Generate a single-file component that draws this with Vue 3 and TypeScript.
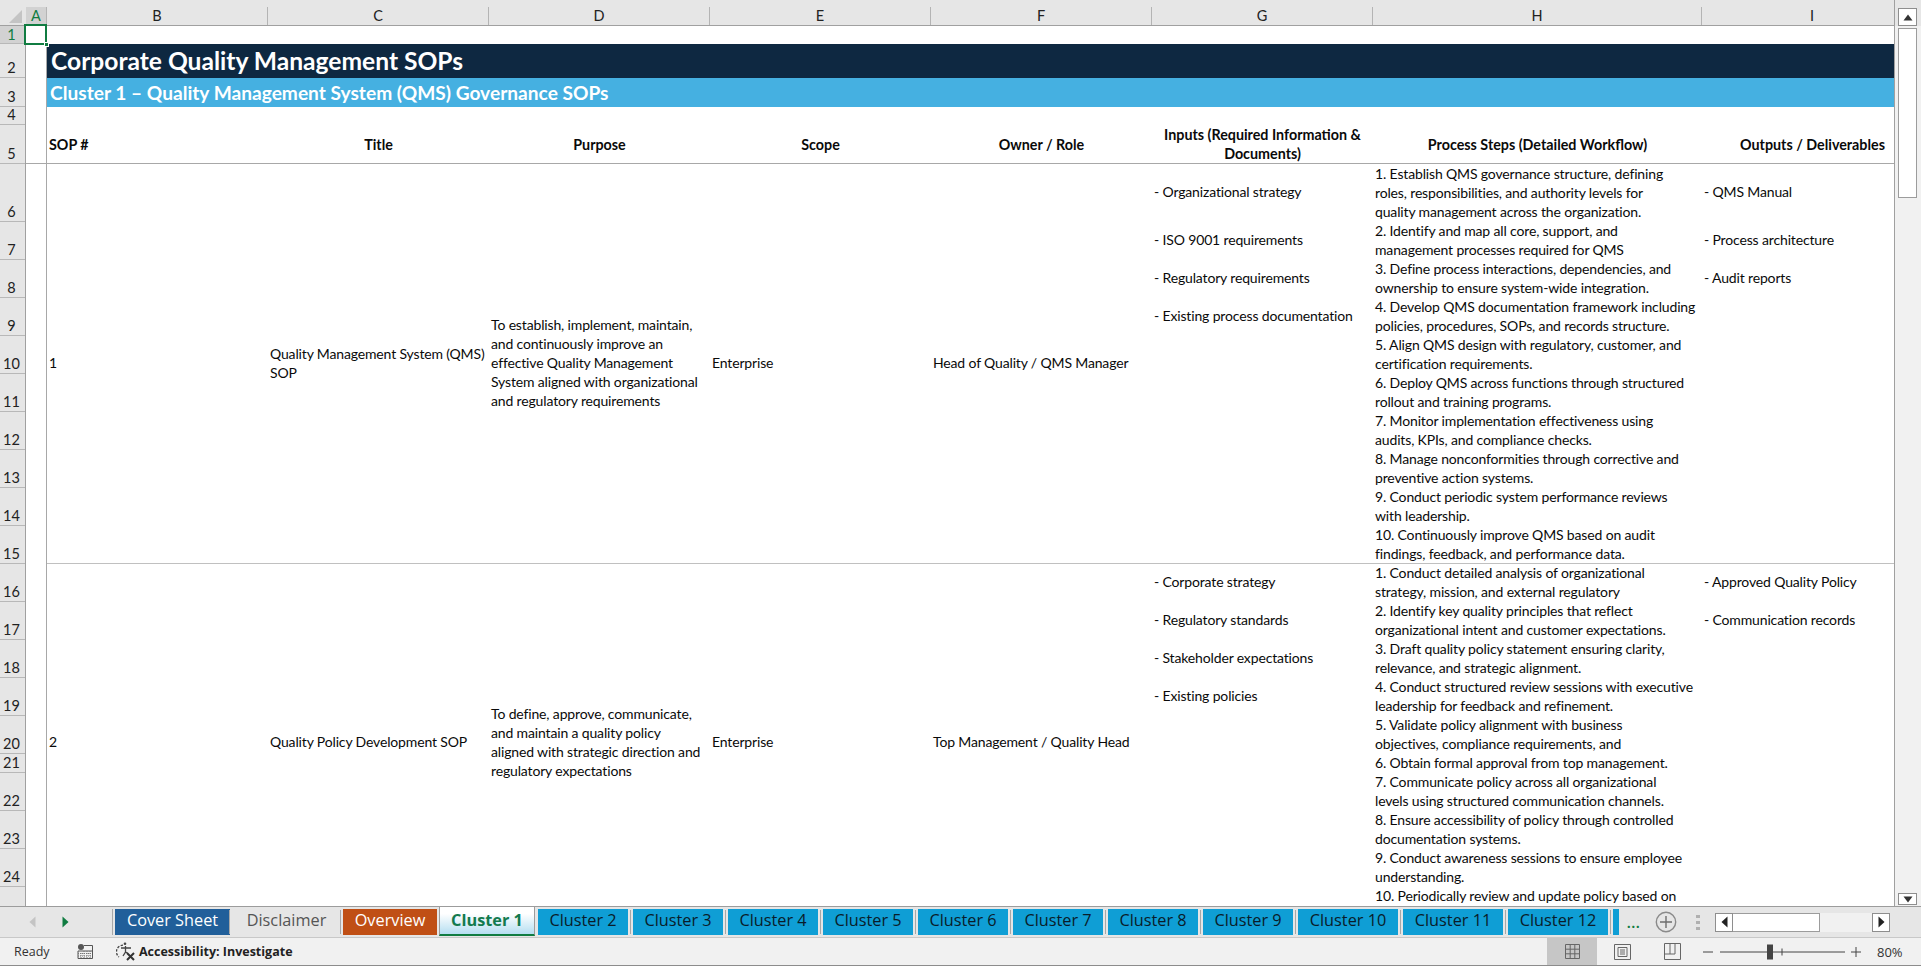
<script setup lang="ts">
const columns = [
  { name: 'A', width: 21, sel: true },
  { name: 'B', width: 221 },
  { name: 'C', width: 221 },
  { name: 'D', width: 221 },
  { name: 'E', width: 221 },
  { name: 'F', width: 221 },
  { name: 'G', width: 221 },
  { name: 'H', width: 329 },
  { name: 'I', width: 221 },
]
const rowHeights = [18, 34, 29, 18, 39, 58, 38, 38, 38, 38, 38, 38, 38, 38, 38, 38, 38, 38, 38, 38, 19, 38, 38, 38]
const rows = rowHeights.map((h, i) => ({ n: i + 1, h }))

const sops = [
  {
    no: '1',
    cls: 'sop-one',
    title: ['Quality Management System (QMS)', 'SOP'],
    purpose: ['To establish, implement, maintain,', 'and continuously improve an', 'effective Quality Management', 'System aligned with organizational', 'and regulatory requirements'],
    scope: 'Enterprise',
    owner: 'Head of Quality / QMS Manager',
    inputs: ['- Organizational strategy', '- ISO 9001 requirements', '- Regulatory requirements', '- Existing process documentation'],
    steps: [
      '1. Establish QMS governance structure, defining', 'roles, responsibilities, and authority levels for', 'quality management across the organization.',
      '2. Identify and map all core, support, and', 'management processes required for QMS',
      '3. Define process interactions, dependencies, and', 'ownership to ensure system-wide integration.',
      '4. Develop QMS documentation framework including', 'policies, procedures, SOPs, and records structure.',
      '5. Align QMS design with regulatory, customer, and', 'certification requirements.',
      '6. Deploy QMS across functions through structured', 'rollout and training programs.',
      '7. Monitor implementation effectiveness using', 'audits, KPIs, and compliance checks.',
      '8. Manage nonconformities through corrective and', 'preventive action systems.',
      '9. Conduct periodic system performance reviews', 'with leadership.',
      '10. Continuously improve QMS based on audit', 'findings, feedback, and performance data.',
    ],
    outputs: ['- QMS Manual', '- Process architecture', '- Audit reports'],
  },
  {
    no: '2',
    cls: 'sop-two',
    title: ['Quality Policy Development SOP'],
    purpose: ['To define, approve, communicate,', 'and maintain a quality policy', 'aligned with strategic direction and', 'regulatory expectations'],
    scope: 'Enterprise',
    owner: 'Top Management / Quality Head',
    inputs: ['- Corporate strategy', '- Regulatory standards', '- Stakeholder expectations', '- Existing policies'],
    steps: [
      '1. Conduct detailed analysis of organizational', 'strategy, mission, and external regulatory',
      '2. Identify key quality principles that reflect', 'organizational intent and customer expectations.',
      '3. Draft quality policy statement ensuring clarity,', 'relevance, and strategic alignment.',
      '4. Conduct structured review sessions with executive', 'leadership for feedback and refinement.',
      '5. Validate policy alignment with business', 'objectives, compliance requirements, and',
      '6. Obtain formal approval from top management.',
      '7. Communicate policy across all organizational', 'levels using structured communication channels.',
      '8. Ensure accessibility of policy through controlled', 'documentation systems.',
      '9. Conduct awareness sessions to ensure employee', 'understanding.',
      '10. Periodically review and update policy based on',
    ],
    outputs: ['- Approved Quality Policy', '- Communication records'],
  },
]

const tabs = [
  { label: 'Cover Sheet', width: 115, cls: 'navy' },
  { label: 'Disclaimer', width: 109, cls: 'plain' },
  { label: 'Overview', width: 94, cls: 'rust' },
  { label: 'Cluster 1', width: 96, cls: 'active' },
  ...[2, 3, 4, 5, 6, 7, 8, 9].map((n) => ({ label: `Cluster ${n}`, width: 90, cls: 'blue' })),
  ...[10, 11, 12].map((n) => ({ label: `Cluster ${n}`, width: 100, cls: 'blue' })),
  { label: '', width: 6, cls: 'blue' },
]
</script>

<template>
  <div class="app">
    <div class="upper">
      <div class="workarea">
        <div class="colhead">
          <div class="corner"><span class="triangle"></span></div>
          <div
            v-for="c in columns"
            :key="c.name"
            class="collabel"
            :class="{ selected: c.sel }"
            :style="{ width: c.width + 'px' }"
          >{{ c.name }}</div>
        </div>
        <div class="grid">
          <div class="rowhead">
            <div
              v-for="r in rows"
              :key="r.n"
              class="rowlabel"
              :class="{ selected: r.n === 1 }"
              :style="{ height: r.h + 'px' }"
            >{{ r.n }}</div>
          </div>
          <div class="colA">
            <div class="selection"><span class="handle"></span></div>
          </div>
          <div class="sheet">
            <div class="blank-row"></div>
            <div class="banner-dark">Corporate Quality Management SOPs</div>
            <div class="banner-light">Cluster 1 – Quality Management System (QMS) Governance SOPs</div>
            <div class="blank-row"></div>
            <div class="columns head-row">
              <div class="head left">SOP #</div>
              <div class="head">Title</div>
              <div class="head">Purpose</div>
              <div class="head">Scope</div>
              <div class="head">Owner / Role</div>
              <div class="head">Inputs (Required Information &amp;<br />Documents)</div>
              <div class="head">Process Steps (Detailed Workflow)</div>
              <div class="head">Outputs / Deliverables</div>
            </div>
            <div v-for="s in sops" :key="s.no" class="columns sop" :class="s.cls">
              <div class="cell">{{ s.no }}</div>
              <div class="cell"><div v-for="l in s.title" :key="l">{{ l }}</div></div>
              <div class="cell"><div v-for="l in s.purpose" :key="l">{{ l }}</div></div>
              <div class="cell">{{ s.scope }}</div>
              <div class="cell">{{ s.owner }}</div>
              <div class="stack">
                <div v-for="l in s.inputs" :key="l" class="stack-item">{{ l }}</div>
              </div>
              <div class="steps"><div v-for="l in s.steps" :key="l">{{ l }}</div></div>
              <div class="stack">
                <div v-for="l in s.outputs" :key="l" class="stack-item">{{ l }}</div>
              </div>
            </div>
          </div>
        </div>
      </div>
      <div class="vscroll">
        <div class="sb-btn">
          <svg width="10" height="7" viewBox="0 0 10 7"><path d="M5 0.5 L9.5 6.5 H0.5 Z" fill="#333" /></svg>
        </div>
        <div class="sb-thumb"></div>
        <div class="sb-track"></div>
        <div class="sb-btn down">
          <svg width="10" height="7" viewBox="0 0 10 7"><path d="M5 6.5 L9.5 0.5 H0.5 Z" fill="#333" /></svg>
        </div>
      </div>
    </div>

    <div class="tabbar">
      <div class="tabnav">
        <svg width="7" height="12" viewBox="0 0 7 12"><path d="M6.5 0.5 V11.5 L0.5 6 Z" fill="#c4c4c4" /></svg>
        <svg width="7" height="12" viewBox="0 0 7 12"><path d="M0.5 0.5 V11.5 L6.5 6 Z" fill="#107c41" /></svg>
      </div>
      <div class="tabs">
        <div
          v-for="t in tabs"
          :key="t.label + t.width"
          class="tab"
          :class="t.cls"
          :style="{ width: t.width + 'px' }"
        >{{ t.label }}</div>
      </div>
      <div class="more">...</div>
      <svg class="addsheet" width="22" height="22" viewBox="0 0 22 22">
        <circle cx="11" cy="11" r="9.7" fill="none" stroke="#8a8a8a" stroke-width="1.4" />
        <path d="M11 5 V17 M5 11 H17" stroke="#6e6e6e" stroke-width="1.4" />
      </svg>
      <div class="vdots"><span></span><span></span><span></span></div>
      <div class="hscroll">
        <div class="hs-btn">
          <svg width="7" height="12" viewBox="0 0 7 12"><path d="M6.5 0.5 V11.5 L0.5 6 Z" fill="#222" /></svg>
        </div>
        <div class="hs-thumb"></div>
        <div class="hs-track"></div>
        <div class="hs-btn">
          <svg width="7" height="12" viewBox="0 0 7 12"><path d="M0.5 0.5 V11.5 L6.5 6 Z" fill="#222" /></svg>
        </div>
      </div>
    </div>

    <div class="status">
      <span class="ready">Ready</span>
      <svg class="macro" width="16" height="15" viewBox="0 0 16 15">
        <circle cx="4" cy="3" r="3" fill="#555" />
        <path d="M7 1.5 H15.5 V14.5 H1 V7 H15.5" fill="none" stroke="#555" stroke-width="1" />
        <path d="M4 9 V14 M7 7 V14 M10 7 V14 M13 7 V14 M1 9.5 H15 M1 12 H15" stroke="#777" stroke-width="1" stroke-dasharray="1 1" />
      </svg>
      <svg class="a11y" width="20" height="19" viewBox="0 0 20 19">
        <path d="M7 3.2 A6.6 6.6 0 0 0 3 15" fill="none" stroke="#444" stroke-width="1.3" stroke-dasharray="2.4 1.4" />
        <circle cx="9" cy="1.8" r="1.3" fill="#444" />
        <path d="M5 6 H15 M9.5 4 V10 L7 14 M9.5 10 L11.5 11" fill="none" stroke="#444" stroke-width="1.3" />
        <path d="M11 11 L18 18 M18 11 L11 18" stroke="#333" stroke-width="2" />
      </svg>
      <span class="a11y-text">Accessibility: Investigate</span>
      <div class="views">
        <div class="view on">
          <svg width="15" height="15" viewBox="0 0 15 15"><path d="M0.5 0.5 H14.5 V14.5 H0.5 Z M5.2 0.5 V14.5 M9.8 0.5 V14.5 M0.5 5.2 H14.5 M0.5 9.8 H14.5" fill="none" stroke="#666" /></svg>
        </div>
        <div class="view">
          <svg width="17" height="16" viewBox="0 0 17 16"><path d="M0.5 0.5 H16.5 V15.5 H0.5 Z" fill="none" stroke="#666" /><path d="M4 3.5 H13 V12.5 H4 Z M6 6 H11 M6 8 H11 M6 10 H11" fill="none" stroke="#666" /></svg>
        </div>
        <div class="view">
          <svg width="17" height="17" viewBox="0 0 17 17"><path d="M0.5 0.5 H16.5 V16.5 H0.5 Z M0.5 11 H11 V0.5 M6 0.5 V11" fill="none" stroke="#666" /></svg>
        </div>
      </div>
      <svg class="zoombar" width="165" height="16" viewBox="0 0 165 16">
        <path d="M3 8 H13 M20 8 H145 M82 4.5 V11.5 M151 8 H161 M156 3 V13" stroke="#444" stroke-width="1" />
        <rect x="67" y="0.5" width="6" height="15" fill="#444" />
      </svg>
      <span class="zoomtext">80%</span>
    </div>
  </div>
</template>

<style>
html, body { margin: 0; padding: 0; background: #fff; }
</style>

<style scoped>
.app {
  width: 1921px;
  height: 966px;
  display: flex;
  flex-direction: column;
  overflow: hidden;
  font-family: Lato, "Liberation Sans", sans-serif;
  color: #0a0a0a;
  background: #fff;
}
.upper { display: flex; height: 907px; border-bottom: 1px solid #9c9c9c; box-sizing: border-box; }
.workarea { width: 1894px; overflow: hidden; display: flex; flex-direction: column; }

.colhead {
  display: flex;
  height: 26px;
  flex: none;
  background: #e6e6e6;
  border-bottom: 1px solid #a0a0a0;
  box-sizing: border-box;
}
.corner { width: 26px; flex: none; position: relative; }
.triangle {
  position: absolute;
  left: 9px;
  top: 10px;
  width: 0;
  height: 0;
  border-left: 13px solid transparent;
  border-bottom: 13px solid #c4c4c4;
}
.collabel {
  flex: none;
  box-sizing: border-box;
  height: 18px;
  margin-top: 7px;
  border-right: 1px solid #b4b4b4;
  font-size: 14.5px;
  line-height: 18px;
  text-align: center;
  color: #222;
}
.collabel.selected { background: #d2d2d2; color: #107c41; }

.grid { display: flex; flex: 1; min-height: 0; }
.rowhead {
  width: 26px;
  flex: none;
  background: #e6e6e6;
  border-right: 1px solid #a0a0a0;
  box-sizing: border-box;
}
.rowlabel {
  box-sizing: border-box;
  border-bottom: 1px solid #b8b8b8;
  display: flex;
  align-items: flex-end;
  justify-content: center;
  padding-right: 2px;
  font-size: 14.5px;
  line-height: 18px;
  color: #222;
}
.rowlabel.selected { background: #d2d2d2; color: #107c41; align-items: center; }
.colA {
  width: 21px;
  flex: none;
  border-right: 1px solid #a8a8a8;
  box-sizing: border-box;
  position: relative;
}
.colA::after {
  content: "";
  position: absolute;
  left: 0;
  right: 0;
  top: 137px;
  height: 1px;
  background: #a8a8a8;
}
.selection {
  position: absolute;
  left: -2px;
  top: -2px;
  width: 19px;
  height: 17px;
  border: 2px solid #107c41;
  box-sizing: content-box;
  z-index: 2;
}
.handle {
  position: absolute;
  right: -4px;
  bottom: -4px;
  width: 5px;
  height: 5px;
  background: #107c41;
  border: 1px solid #fff;
  box-sizing: border-box;
}

.sheet { width: 1875px; flex: none; overflow: hidden; }
.blank-row { height: 18px; }
.banner-dark {
  height: 34px;
  background: #0e2841;
  color: #fff;
  font-size: 24.6px;
  font-weight: 700;
  line-height: 34px;
  padding-left: 4px;
}
.banner-light {
  height: 29px;
  background: #45b0e1;
  color: #fff;
  font-size: 19.15px;
  font-weight: 700;
  line-height: 30px;
  padding-left: 3px;
}
.columns {
  display: grid;
  grid-template-columns: repeat(6, 221px) 329px 221px;
  font-size: 14px;
  letter-spacing: -0.15px;
  line-height: 19px;
  white-space: nowrap;
}
.head-row { height: 39px; border-bottom: 1px solid #a8a8a8; box-sizing: border-box; }
.head {
  font-size: 14.3px;
  letter-spacing: 0;
  font-weight: 700;
  text-align: center;
  align-self: center;
  margin-bottom: 1px;
}
.head.left { text-align: left; padding-left: 2px; }
.sop { box-sizing: border-box; border-bottom: 1px solid #c0c0c0; }
.sop-one { height: 400px; }
.sop-two { height: 360px; margin-top: -1px; }
.cell { align-self: center; padding-left: 2px; margin-bottom: 2px; }
.steps { padding-left: 2px; overflow: hidden; }
.stack { margin-top: -1px; }
.stack-item { height: 38px; display: flex; align-items: center; padding-left: 2px; }
.sop-one .stack-item:first-child { height: 58px; margin-top: -1px; }

.vscroll {
  width: 27px;
  flex: none;
  box-sizing: border-box;
  border-left: 1px solid #a0a0a0;
  background: linear-gradient(#e6e6e6 0 26px, #f1f1f1 26px);
  padding: 8px 4px 1px 3px;
  display: flex;
  flex-direction: column;
}
.sb-btn {
  height: 18px;
  flex: none;
  background: #fff;
  border: 1px solid #8e8e8e;
  box-sizing: border-box;
  display: flex;
  align-items: center;
  justify-content: center;
}
.sb-thumb { height: 170px; flex: none; margin-top: 2px; background: #fff; border: 1px solid #9c9c9c; box-sizing: border-box; }
.sb-track { flex: 1; }
.sb-btn.down { height: 12px; }

.tabbar {
  height: 31px;
  flex: none;
  background: #e6e6e6;
  border-bottom: 1px solid #c8c8c8;
  box-sizing: border-box;
  display: flex;
  align-items: center;
}
.tabnav {
  width: 113px;
  height: 26px;
  flex: none;
  box-sizing: border-box;
  padding-left: 29px;
  display: flex;
  align-items: center;
  gap: 26px;
  border-right: 1px solid #a8a8a8;
  margin-top: -1px;
}
.tabs {
  width: 1505px;
  flex: none;
  display: flex;
  align-items: flex-start;
  box-sizing: border-box;
  align-self: stretch;
  padding-top: 2px;
}
.tab {
  flex: none;
  height: 26px;
  box-sizing: border-box;
  margin-left: 5px;
  font-family: "Open Sans", "Noto Sans", sans-serif;
  font-size: 16.3px;
  line-height: 22px;
  text-align: center;
  position: relative;
  white-space: nowrap;
}
.tab + .tab::before {
  content: "";
  position: absolute;
  left: -3px;
  top: 1px;
  bottom: 1px;
  width: 1px;
  background: #a8a8a8;
}
.tab.navy { background: #215f9a; color: #fff; margin-left: 2px; }
.tab.rust { background: #c04f15; color: #fff; margin-left: 2px; }
.tab.plain { color: #555; margin-left: 2px; }
.tab.blue { background: #0f9ed5; color: #0a1c2a; }
.tab.active {
  height: 29px;
  margin-top: -2px;
  margin-left: 2px;
  font-weight: 700;
  color: #137a4e;
  background: linear-gradient(#fff, #fff 25%, #b5def1);
  border-left: 1px solid #9c9c9c;
  border-right: 1px solid #9c9c9c;
  border-bottom: 2px solid #107c41;
  padding-top: 2px;
}
.tab.active::before { display: none; }
.tab.active + .blue { margin-left: 3px; }
.tab.active + .blue::before { display: none; }
.more { width: 22px; margin-left: 9px; color: #107c41; font-size: 15px; font-weight: 700; letter-spacing: 1px; line-height: 14px; }
.addsheet { margin-left: 6px; flex: none; }
.vdots { width: 4px; margin-left: 19px; display: flex; flex-direction: column; gap: 3px; }
.vdots span { width: 4px; height: 3px; background: #b0b0b0; }
.hscroll { display: flex; margin-left: 15px; height: 19px; width: 175px; flex: none; }
.hs-btn {
  width: 18px;
  flex: none;
  background: #fff;
  border: 1px solid #8e8e8e;
  box-sizing: border-box;
  display: flex;
  align-items: center;
  justify-content: center;
}
.hs-thumb { width: 87px; flex: none; background: #fff; border: 1px solid #9c9c9c; border-left-width: 0; box-sizing: border-box; }
.hs-track { flex: 1; background: #f1f1f1; }

.status {
  flex: 1;
  background: #f1f1f1;
  border-bottom: 1px solid #8c8c8c;
  box-sizing: border-box;
  display: flex;
  align-items: center;
  font-family: "Open Sans", "Noto Sans", sans-serif;
  font-size: 12.5px;
  color: #333;
}
.ready { margin-left: 14px; width: 63px; flex: none; }
.macro { flex: none; }
.a11y { margin-left: 23px; flex: none; }
.a11y-text { margin-left: 3px; font-weight: 700; color: #222; font-size: 12.5px; }
.views { margin-left: auto; display: flex; align-self: stretch; }
.view { width: 50px; display: flex; align-items: center; justify-content: center; }
.view.on { background: #c6c6c6; }
.zoombar { margin-left: 3px; flex: none; }
.zoomtext { margin-left: 12px; margin-right: 20px; width: 24px; flex: none; font-size: 13px; }
</style>
